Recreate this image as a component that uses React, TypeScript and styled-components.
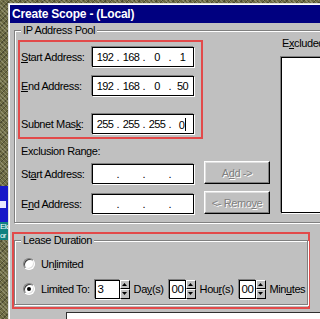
import React from 'react';
import styled, {createGlobalStyle} from 'styled-components';

const face = '#c0c0c0';
const shadow = '#808080';
const annotationRed = '#e24a4a';

const GlobalStyle = createGlobalStyle`
  html, body {
    margin: 0;
    padding: 0;
  }
  body {
    width: 320px;
    height: 319px;
    overflow: hidden;
    font-family: "Liberation Sans", Arial, sans-serif;
    font-size: 11px;
    letter-spacing: -0.4px;
    color: #000;
  }
`

const Screen = styled.div`
  display: flex;
  width: 320px;
  height: 319px;
  overflow: hidden;
  background-color: #6d6b44;
  background-image:
    repeating-linear-gradient(45deg, rgba(255, 255, 230, 0.22) 0 1px, transparent 1px 3px),
    repeating-linear-gradient(-45deg, rgba(0, 0, 0, 0.3) 0 1px, transparent 1px 4px);
`

const DesktopStrip = styled.div`
  width: 8px;
  flex: 0 0 auto;
  display: flex;
  flex-direction: column;
  padding-top: 186px;
`

const DesktopIcon = styled.div`
  height: 36px;
  background: #1818c8;
  display: flex;
  align-items: center;

  > span {
    width: 6px;
    height: 7px;
    background: #e8e8ff;
  }
`

const DesktopLabel = styled.div`
  height: 18px;
  background: #108080;
  color: #fff;
  font-size: 8px;
  line-height: 9px;
  letter-spacing: -0.6px;
  overflow: hidden;
  white-space: nowrap;
`

const Window = styled.div`
  flex: 1 1 auto;
  min-width: 0;
  margin-top: 3px;
  padding: 1px 0 0 1px;
  background: ${face};
  border-top: 1px solid #dfdfdf;
  border-left: 1px solid #dfdfdf;
  box-shadow: inset 1px 1px #fff;
  display: flex;
  flex-direction: column;
  overflow: hidden;
`

const TitleBar = styled.div`
  height: 18px;
  flex: 0 0 auto;
  display: flex;
  align-items: center;
  padding-left: 2px;
  background: #000080;
  color: #fff;
  font-weight: bold;
  font-size: 12px;
  letter-spacing: -0.2px;
  white-space: nowrap;
`

const Body = styled.div`
  display: flex;
  flex-direction: column;
  padding-left: 2px;
`

const GroupBox = styled.fieldset`
  margin: ${({$top}) => $top}px ${({$right}) => $right ?? -20}px 0 ${({$left}) => $left}px;
  padding: ${({$pad}) => $pad};
  min-width: 0;
  border: 1px solid ${shadow};
  box-shadow: inset 1px 1px #fff, 1px 1px #fff;
`

const GroupTitle = styled.legend`
  margin-left: 3px;
  padding: 0 2px;
  line-height: 13px;
  background: ${face};
`

const PoolColumns = styled.div`
  display: flex;
`

const LeftColumn = styled.div`
  width: 252px;
  flex: 0 0 auto;
  display: flex;
  flex-direction: column;
`

const Annotation = styled.div`
  box-sizing: border-box;
  width: ${({$width}) => $width}px;
  padding: ${({$pad}) => $pad};
  border: 2px solid ${annotationRed};
  display: flex;
  flex-direction: column;
`

const FieldRow = styled.div`
  display: flex;
  align-items: center;
  height: 20px;
  margin-top: ${({$gap}) => $gap || 0}px;
`

const FieldLabel = styled.span`
  width: 71px;
  flex: 0 0 auto;
  line-height: 20px;
  white-space: nowrap;
`

const Key = styled.u`
  text-decoration: underline;
  text-underline-offset: 1px;
`

const sunken = `
  background: #fff;
  border: 1px solid #000;
  box-shadow: -1px -1px ${shadow}, 1px 1px #fff;
`

const IpBox = styled.div`
  box-sizing: border-box;
  width: 102px;
  height: 20px;
  flex: 0 0 auto;
  display: flex;
  align-items: center;
  padding-left: 1px;
  ${sunken}
`

const Octet = styled.span`
  width: 22px;
  text-align: center;
  letter-spacing: -0.6px;
  white-space: nowrap;
  &:last-child {
    flex: 1;
  }
`

const OctetDot = styled.span`
  width: 4px;
  text-align: center;
  letter-spacing: 0;
`

const Caret = styled.span`
  display: inline-block;
  width: 1px;
  height: 13px;
  margin-left: 1px;
  vertical-align: -2px;
  background: #000;
`

const SectionLabel = styled.div`
  margin: 6px 0 0 3px;
  line-height: 13px;
`

const RangeRow = styled.div`
  display: flex;
  align-items: flex-end;
  height: 23px;
  padding-left: 3px;
  margin-top: ${({$gap}) => $gap}px;
`

const PushButton = styled.button`
  box-sizing: border-box;
  width: 66px;
  height: 23px;
  margin-left: 10px;
  padding: 0;
  font: inherit;
  letter-spacing: -0.4px;
  background: ${face};
  color: ${shadow};
  text-shadow: 1px 1px #fff;
  border: 1px solid;
  border-color: #fff #000 #000 #fff;
  box-shadow: inset -1px -1px ${shadow}, inset 1px 1px #dfdfdf;
  white-space: nowrap;
`

const RightColumn = styled.div`
  flex: 1 1 auto;
  margin-left: 11px;
  display: flex;
  flex-direction: column;
`

const ListCaption = styled.div`
  margin: -3px 0 0 1px;
  line-height: 13px;
  white-space: nowrap;
`

const ListBox = styled.div`
  box-sizing: border-box;
  height: 156px;
  margin-top: 7px;
  ${sunken}
`

const LeaseAnnotation = styled(Annotation)`
  margin-top: 9px;
`

const OptionRow = styled.div`
  display: flex;
  align-items: center;
  height: ${({$h}) => $h}px;
  margin-top: ${({$gap}) => $gap || 0}px;
  padding-left: 5px;
  white-space: nowrap;
`

const RadioCircle = styled.span`
  box-sizing: border-box;
  width: 12px;
  height: 12px;
  flex: 0 0 auto;
  margin-right: 6px;
  border-radius: 50%;
  background: #fff;
  border: 1px solid;
  border-color: ${shadow} #fff #fff ${shadow};
  box-shadow: inset 1px 1px #404040, inset -1px -1px #dfdfdf;
  display: flex;
  align-items: center;
  justify-content: center;
`

const RadioDot = styled.span`
  width: 4px;
  height: 4px;
  border-radius: 50%;
  background: #000;
`

const SpinBox = styled.div`
  display: flex;
  height: 19px;
  margin-left: ${({$gap}) => $gap}px;
  margin-right: 4px;
`

const SpinInput = styled.div`
  box-sizing: border-box;
  width: ${({$width}) => $width}px;
  padding-left: 2px;
  line-height: 17px;
  font-size: 11.5px;
  letter-spacing: -0.5px;
  ${sunken}
`

const SpinButtons = styled.div`
  width: 10px;
  display: flex;
  flex-direction: column;
`

const SpinButton = styled.div`
  flex: 1;
  box-sizing: border-box;
  background: ${face};
  border: 1px solid;
  border-color: #fff #000 #000 #fff;
  display: flex;
  align-items: center;
  justify-content: center;
`

const BottomRow = styled.div`
  display: flex;
  margin-top: 3px;
  padding-left: 54px;
`

const NextField = styled.div`
  flex: 1;
  height: 12px;
  margin-right: -20px;
  background: #fff;
  border-top: 1px solid #303030;
  border-left: 1px solid #303030;
`

const Arrow = ({up}) => (
  <svg width="5" height="3" viewBox="0 0 5 3">
    <polygon points={up ? '2.5,0 5,3 0,3' : '0,0 5,0 2.5,3'} fill="#000"/>
  </svg>
)

const IpField = ({octets, caret}) => (
  <IpBox>
    {octets.map((value, i) => (
      <React.Fragment key={i}>
        {i > 0 && <OctetDot>.</OctetDot>}
        <Octet>{value}{caret && i === 3 && <Caret/>}</Octet>
      </React.Fragment>
    ))}
  </IpBox>
)

const Spin = ({value, width, gap}) => (
  <SpinBox $gap={gap}>
    <SpinInput $width={width}>{value}</SpinInput>
    <SpinButtons>
      <SpinButton><Arrow up/></SpinButton>
      <SpinButton><Arrow/></SpinButton>
    </SpinButtons>
  </SpinBox>
)

const Radio = ({checked, children}) => <>
  <RadioCircle>{checked && <RadioDot/>}</RadioCircle>
  {children}
</>

const empty = ['', '', '', '']

export default function App() {
  return <>
    <GlobalStyle/>
    <Screen>
      <DesktopStrip>
        <DesktopIcon><span/></DesktopIcon>
        <DesktopLabel>Elc<br/>or</DesktopLabel>
      </DesktopStrip>
      <Window>
        <TitleBar>Create Scope - (Local)</TitleBar>
        <Body>
          <GroupBox $top={1} $left={2} $pad="3px 0 8px 3px">
            <GroupTitle>IP Address Pool</GroupTitle>
            <PoolColumns>
              <LeftColumn>
                <Annotation $width={185} $pad="5px 7px 3px 1px">
                  <FieldRow>
                    <FieldLabel><Key>S</Key>tart Address:</FieldLabel>
                    <IpField octets={['192', '168', '0', '1']}/>
                  </FieldRow>
                  <FieldRow $gap={9}>
                    <FieldLabel><Key>E</Key>nd Address:</FieldLabel>
                    <IpField octets={['192', '168', '0', '50']}/>
                  </FieldRow>
                  <FieldRow $gap={18}>
                    <FieldLabel>Subnet Mas<Key>k</Key>:</FieldLabel>
                    <IpField octets={['255', '255', '255', '0']} caret/>
                  </FieldRow>
                </Annotation>
                <SectionLabel>Exclusion Range:</SectionLabel>
                <RangeRow $gap={3}>
                  <FieldLabel>St<Key>a</Key>rt Address:</FieldLabel>
                  <IpField octets={empty}/>
                  <PushButton disabled>A<Key>d</Key>d -&gt;</PushButton>
                </RangeRow>
                <RangeRow $gap={7}>
                  <FieldLabel>E<Key>n</Key>d Address:</FieldLabel>
                  <IpField octets={empty}/>
                  <PushButton disabled>&lt;- Remo<Key>v</Key>e</PushButton>
                </RangeRow>
              </LeftColumn>
              <RightColumn>
                <ListCaption>E<Key>x</Key>cluded addresses:</ListCaption>
                <ListBox/>
              </RightColumn>
            </PoolColumns>
          </GroupBox>

          <LeaseAnnotation $width={298} $pad="0 0 2px 0">
            <GroupBox $top={0} $left={0} $right={0} $pad="9px 0 5px 3px">
              <GroupTitle>Lease Duration</GroupTitle>
              <OptionRow $h={16}>
                <Radio>Un<Key>l</Key>imited</Radio>
              </OptionRow>
              <OptionRow $h={20} $gap={7}>
                <Radio checked>Limited To:</Radio>
                <Spin value="3" width={25} gap={5}/>
                <span>Da<Key>y</Key>(s)</span>
                <Spin value="00" width={17} gap={5}/>
                <span>Hou<Key>r</Key>(s)</span>
                <Spin value="00" width={17} gap={5}/>
                <span>Min<Key>u</Key>tes</span>
              </OptionRow>
            </GroupBox>
          </LeaseAnnotation>

          <BottomRow>
            <NextField/>
          </BottomRow>
        </Body>
      </Window>
    </Screen>
  </>
}
